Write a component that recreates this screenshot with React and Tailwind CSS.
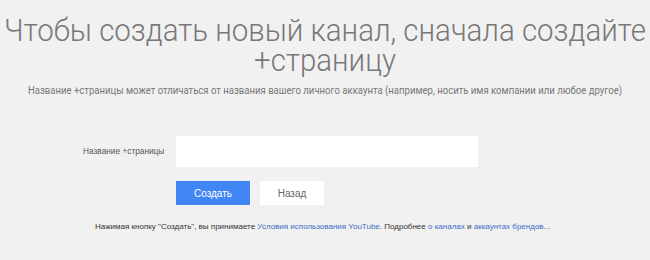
export default function App() {
  return (
    <div className="w-[650px] h-[260px] overflow-hidden bg-[#f1f1f1] font-['Roboto',sans-serif]">
      <h1 className="pt-[16px] -mx-[40px] text-center text-[31px] leading-[30px] font-light text-[#787878] whitespace-nowrap scale-x-[0.95]">
        Чтобы создать новый канал, сначала создайте
        <br />
        +страницу
      </h1>
      <p className="mt-[8px] -mx-[40px] text-center text-[10.5px] leading-[14px] text-[#777] whitespace-nowrap scale-x-[0.91]">
        Название +страницы может отличаться от названия вашего личного аккаунта (например, носить имя компании или любое другое)
      </p>

      <div className="mt-[38px] flex items-center">
        <label className="w-[176px] pl-[83px] text-[8.3px] text-[#555] font-['Liberation_Sans',sans-serif] whitespace-nowrap">
          Название +страницы
        </label>
        <div className="w-[302px] h-[31px] bg-white" />
      </div>

      <div className="mt-[14px] pl-[176px] flex gap-[10px] font-['Liberation_Sans',sans-serif] text-[10px]">
        <button className="w-[74px] h-[24px] bg-[#4285f4] text-white">Создать</button>
        <button className="w-[64px] h-[24px] bg-white text-[#666]">Назад</button>
      </div>

      <p className="mt-[17px] pl-[95px] text-[8px] leading-[10px] text-[#333] font-['Liberation_Sans',sans-serif] whitespace-nowrap">
        Нажимая кнопку "Создать", вы принимаете{" "}
        <span className="text-[#3b6bc4]">Условия использования YouTube</span>. Подробнее{" "}
        <span className="text-[#3b6bc4]">о каналах</span> и{" "}
        <span className="text-[#3b6bc4]">аккаунтах брендов...</span>
      </p>
    </div>
  );
}
